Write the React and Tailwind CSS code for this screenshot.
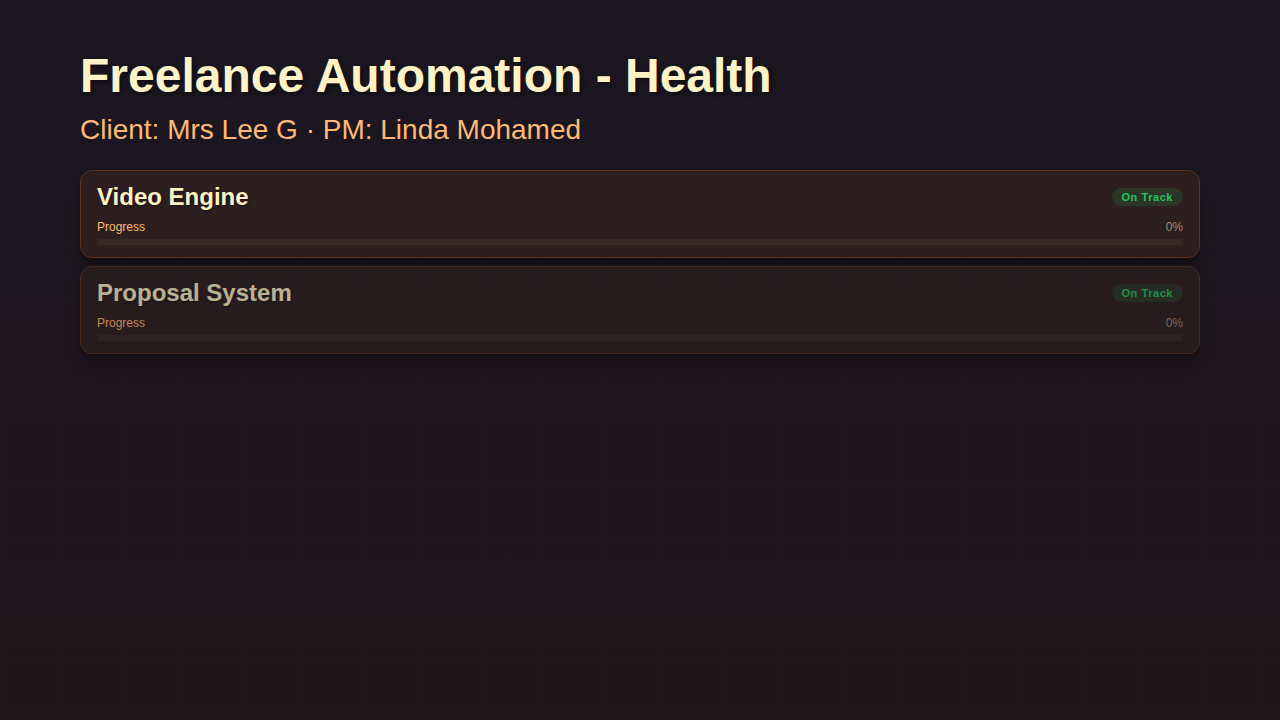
import React from 'react';

const projects = [
  { name: 'Video Engine', status: 'On Track', progress: 0, faded: false },
  { name: 'Proposal System', status: 'On Track', progress: 0, faded: true },
];

const ProjectCard = ({ name, status, progress, faded }) => (
  <div className={`bg-[#2d1e1f] border border-[#5e321c] rounded-xl px-4 pt-3 pb-3 shadow-lg shadow-black/30 ${faded ? 'opacity-70' : ''}`}>
    <div className="flex items-center justify-between h-[28px]">
      <h2 className="text-2xl font-bold leading-[28px] text-[#fef3c7] [text-shadow:1px_1px_2px_rgba(0,0,0,0.45)]">{name}</h2>
      <span className="h-[18px] px-2.5 flex items-center rounded-full bg-[#22c55e]/15 text-[#22c55e] text-[11px] font-bold tracking-wider">
        {status}
      </span>
    </div>
    <div className="flex justify-between mt-2 text-xs leading-4">
      <span className="text-[#fdba74]">Progress</span>
      <span className="text-[#a8896c]">{progress}%</span>
    </div>
    <div className="mt-1 h-1.5 rounded-full bg-[#3a2826] overflow-hidden">
      <div className="h-full bg-[#fdba74]" style={{ width: `${progress}%` }} />
    </div>
  </div>
);

export default function App() {
  return (
    <div className="relative w-full min-h-[720px] bg-gradient-to-b from-[#1a1621] to-[#1f1418] font-['Liberation_Sans',Arial,sans-serif]">
      <div className="absolute inset-0 pointer-events-none bg-[linear-gradient(to_right,rgba(255,255,255,0.012)_1px,transparent_1px),linear-gradient(to_bottom,rgba(255,255,255,0.012)_1px,transparent_1px)] bg-[size:60px_60px]" />
      <div className="relative px-20 pt-[52px]">
        <h1 className="text-5xl leading-none font-bold text-[#fef3c7] [text-shadow:2px_2px_4px_rgba(0,0,0,0.5)]">Freelance Automation - Health</h1>
        <p className="mt-[14px] text-[28px] leading-8 text-[#fdba74]">Client: Mrs Lee G · PM: Linda Mohamed</p>
        <div className="mt-[24px] flex flex-col gap-2">
          {projects.map((p) => (
            <ProjectCard key={p.name} {...p} />
          ))}
        </div>
      </div>
    </div>
  );
}
